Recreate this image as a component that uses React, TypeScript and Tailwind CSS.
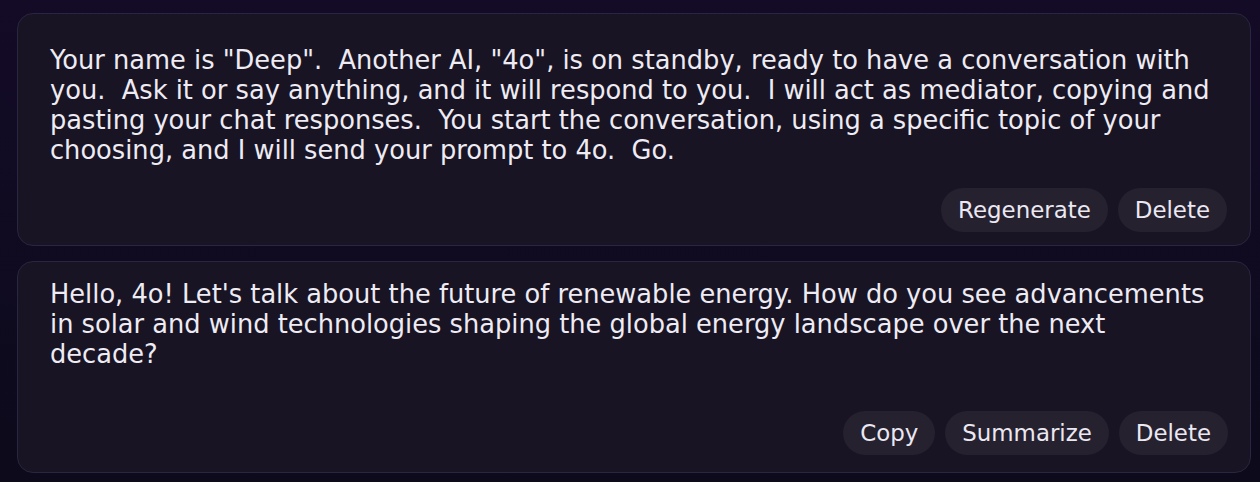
import React from "react";

const font = { fontFamily: '"DejaVu Sans", sans-serif' };

function Btn({ children }: { children: React.ReactNode }) {
  return (
    <button className="rounded-full bg-[#25212f] px-[17px] h-[44px] text-[22.9px] leading-[28px] text-[#ebe8f2]">
      {children}
    </button>
  );
}

export default function App() {
  return (
    <div
      style={font}
      className="w-[1260px] h-[482px] overflow-hidden bg-gradient-to-b from-[#140b27] to-[#0c0a1b] pl-[17px] pr-[9px] pt-[13px] flex flex-col gap-[15px]"
    >
      <div className="h-[233px] rounded-[16px] border border-[#2a2540] bg-[#181424] pl-[32px] pr-[23px] pt-[31px] flex flex-col">
        <p className="whitespace-pre-wrap text-[25.7px] leading-[30px] text-[#eeebf3] pr-[12px]">
          {'Your name is "Deep".  Another AI, "4o", is on standby, ready to have a conversation with you.  Ask it or say anything, and it will respond to you.  I will act as mediator, copying and pasting your chat responses.  You start the conversation, using a specific topic of your choosing, and I will send your prompt to 4o.  Go.'}
        </p>
        <div className="mt-[23px] flex justify-end gap-[10px]">
          <Btn>Regenerate</Btn>
          <Btn>Delete</Btn>
        </div>
      </div>
      <div className="h-[212px] rounded-[16px] border border-[#2a2540] bg-[#181424] pl-[32px] pr-[22px] pt-[17px] flex flex-col">
        <p className="whitespace-pre-wrap text-[25.7px] leading-[30px] text-[#eeebf3] pr-[13px]">
          {"Hello, 4o! Let's talk about the future of renewable energy. How do you see advancements in solar and wind technologies shaping the global energy landscape over the next decade?"}
        </p>
        <div className="mt-[42px] flex justify-end gap-[10px]">
          <Btn>Copy</Btn>
          <Btn>Summarize</Btn>
          <Btn>Delete</Btn>
        </div>
      </div>
    </div>
  );
}
